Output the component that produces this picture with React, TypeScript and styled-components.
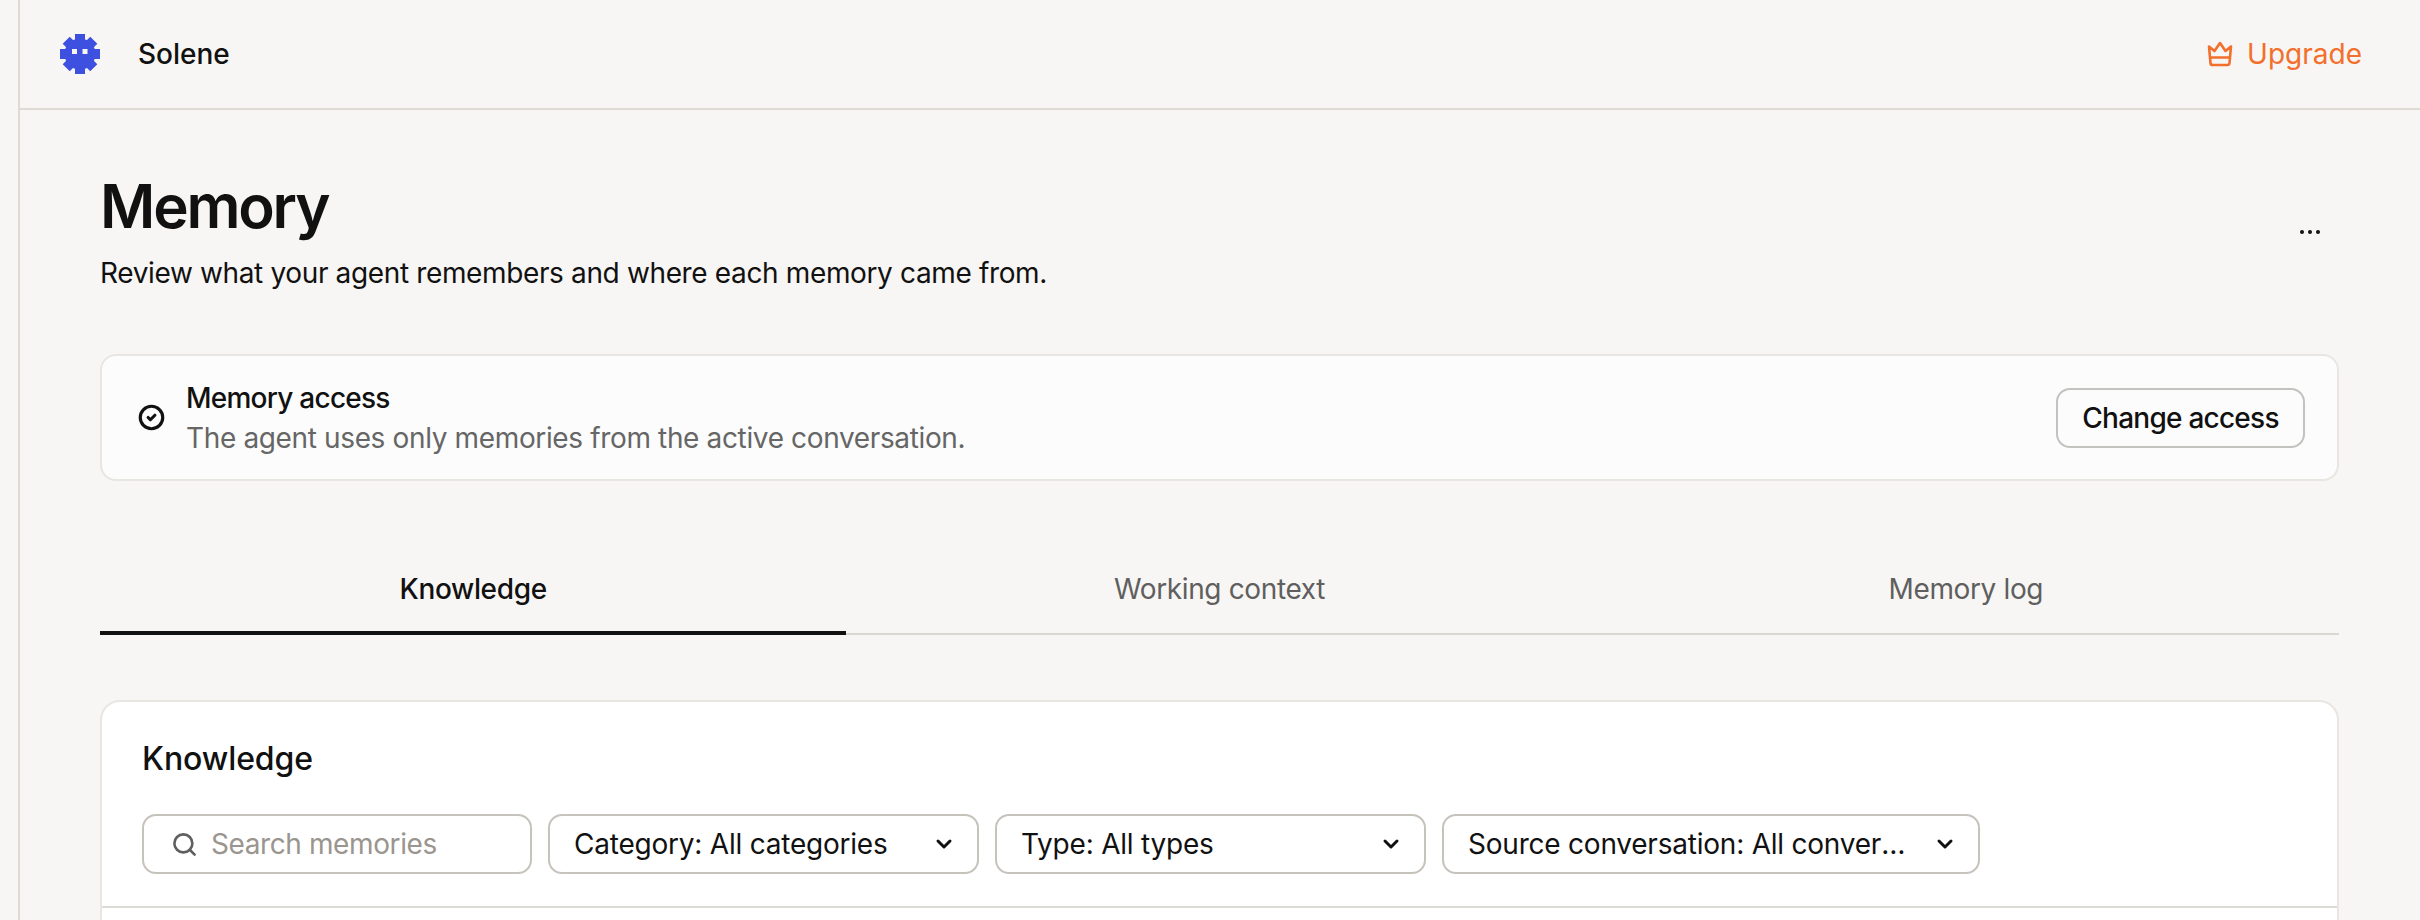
import React from "react";
import styled, { createGlobalStyle } from "styled-components";
import { ChevronDown, CircleCheck, Search } from "lucide-react";

const FONT = `"Inter", "Liberation Sans", sans-serif`;

const GlobalStyle = createGlobalStyle`
  html, body {
    margin: 0;
    padding: 0;
    background: #f7f6f4;
  }
  body {
    font-family: ${FONT};
    color: #111111;
    letter-spacing: -0.36px;
  }
  * {
    box-sizing: border-box;
  }
`;

function Logo() {
  return (
    <svg width="40" height="40" viewBox="0 0 40 40">
      <g fill="#3d50e0">
        <circle cx="20" cy="20" r="15.500" />
        <rect x="15" y="0" width="10" height="40" />
        <rect x="0" y="15" width="40" height="10" />
        <rect x="15" y="0.500" width="10" height="39" transform="rotate(45 20 20)" />
        <rect x="15" y="0.500" width="10" height="39" transform="rotate(-45 20 20)" />
      </g>
      <rect x="12" y="15" width="5" height="5" fill="#f7f6f4" />
      <rect x="22.500" y="15" width="5" height="5" fill="#f7f6f4" />
    </svg>
  );
}

function CrownIcon() {
  return (
    <svg width="26" height="26" viewBox="0 0 26 26" fill="none" stroke="#f26f2c" strokeWidth="2.6" strokeLinejoin="round" strokeLinecap="round">
      <path d="M2 5.500 L7.500 10 L13 2 L18.500 10 L24 5.500 L22.500 22 Q22.300 24 20.300 24 H5.700 Q3.700 24 3.500 22 Z" />
      <path d="M3.500 16.500 H22.500" />
    </svg>
  );
}

function DotsIcon() {
  return (
    <svg width="24" height="6" viewBox="0 0 24 6" fill="#111111">
      <circle cx="4" cy="3" r="2" />
      <circle cx="12" cy="3" r="2" />
      <circle cx="20" cy="3" r="2" />
    </svg>
  );
}

const filters = [
  { label: "Category: All categories", width: 431 },
  { label: "Type: All types", width: 431 },
  { label: "Source conversation: All conversations", width: 538 },
];

export default function App() {
  return (
    <>
      <GlobalStyle />
      <Frame>
        <Rail />
        <Content>
          <TopBar>
            <Brand>
              <Logo />
              <BrandName>Solene</BrandName>
            </Brand>
            <UpgradeLink>
              <CrownIcon />
              Upgrade
            </UpgradeLink>
          </TopBar>
          <Main>
            <PageHead>
              <div>
                <Title>Memory</Title>
                <Subtitle>Review what your agent remembers and where each memory came from.</Subtitle>
              </div>
              <MoreButton>
                <DotsIcon />
              </MoreButton>
            </PageHead>

            <AccessCard>
              <AccessInfo>
                <CircleCheck size={27} strokeWidth={2.8} color="#111111" />
                <div>
                  <AccessTitle>Memory access</AccessTitle>
                  <AccessText>The agent uses only memories from the active conversation.</AccessText>
                </div>
              </AccessInfo>
              <ChangeButton>Change access</ChangeButton>
            </AccessCard>

            <Tabs>
              <Tab $active>Knowledge</Tab>
              <Tab>Working context</Tab>
              <Tab>Memory log</Tab>
            </Tabs>

            <Panel>
              <PanelHead>
                <PanelTitle>Knowledge</PanelTitle>
                <FilterRow>
                  <SearchBox>
                    <Search size={27} strokeWidth={2.3} color="#5f5f5f" />
                    <SearchInput placeholder="Search memories" />
                  </SearchBox>
                  {filters.map((f) => (
                    <Select key={f.label} $width={f.width}>
                      <SelectLabel>{f.label}</SelectLabel>
                      <ChevronDown size={24} strokeWidth={3} color="#111111" />
                    </Select>
                  ))}
                </FilterRow>
              </PanelHead>
            </Panel>
          </Main>
        </Content>
      </Frame>
    </>
  );
}

const Frame = styled.div`
  display: flex;
  height: 920px;
  overflow: hidden;
  padding-left: 18px;
`;

const Rail = styled.div`
  width: 2px;
  flex: none;
  background: #dddbd3;
`;

const Content = styled.div`
  flex: 1;
  min-width: 0;
`;

const TopBar = styled.header`
  height: 110px;
  display: flex;
  align-items: center;
  justify-content: space-between;
  padding: 0 58px 0 40px;
  border-bottom: 2px solid #dddbd3;
`;

const Brand = styled.div`
  display: flex;
  align-items: center;
  gap: 38px;
`;

const BrandName = styled.span`
  font-size: 28px;
  font-weight: 500;
  letter-spacing: 0;
`;

const UpgradeLink = styled.a`
  display: flex;
  align-items: center;
  gap: 14px;
  font-size: 28px;
  font-weight: 400;
  letter-spacing: 0;
  color: #f26f2c;
`;

const Main = styled.main`
  padding: 58px 81px 0 80px;
`;

const PageHead = styled.div`
  display: flex;
  align-items: center;
  justify-content: space-between;
  height: 126px;
`;

const Title = styled.h1`
  margin: 0;
  font-size: 60px;
  line-height: 72px;
  font-weight: 600;
  letter-spacing: -2.2px;
`;

const Subtitle = styled.p`
  margin: 11px 0 0;
  font-size: 28px;
  line-height: 40px;
`;

const MoreButton = styled.button`
  width: 58px;
  height: 66px;
  border: none;
  background: none;
  padding: 2px 0 0;
  display: flex;
  align-items: center;
  justify-content: center;
`;

const AccessCard = styled.section`
  margin-top: 60px;
  height: 127px;
  display: flex;
  align-items: center;
  justify-content: space-between;
  padding: 0 32px 0 36px;
  background: #fcfcfc;
  border: 2px solid #e9e6e1;
  border-radius: 16px;
`;

const AccessInfo = styled.div`
  display: flex;
  align-items: center;
  gap: 21px;
`;

const AccessTitle = styled.div`
  font-size: 28px;
  line-height: 40px;
  font-weight: 500;
  letter-spacing: -0.75px;
`;

const AccessText = styled.div`
  font-size: 28px;
  line-height: 40px;
  color: #666666;
`;

const ChangeButton = styled.button`
  width: 249px;
  height: 60px;
  font-family: ${FONT};
  font-size: 28px;
  font-weight: 500;
  letter-spacing: -0.75px;
  color: #111111;
  background: transparent;
  border: 2px solid #c4c2bf;
  border-radius: 14px;
`;

const Tabs = styled.nav`
  margin-top: 63px;
  display: grid;
  grid-template-columns: repeat(3, 1fr);
  border-bottom: 2px solid #d9d7d2;
`;

const Tab = styled.div<{ $active?: boolean }>`
  height: 91px;
  margin-bottom: -2px;
  padding-top: 2px;
  display: flex;
  align-items: center;
  justify-content: center;
  font-size: 28px;
  font-weight: ${({ $active }) => ($active ? 500 : 400)};
  color: ${({ $active }) => ($active ? "#111111" : "#5f5f5f")};
  border-bottom: 4px solid ${({ $active }) => ($active ? "#111111" : "transparent")};
`;

const Panel = styled.section`
  margin-top: 65px;
  min-height: 400px;
  background: #ffffff;
  border: 2px solid #e9e6e1;
  border-radius: 20px;
`;

const PanelHead = styled.div`
  padding: 33px 40px 32px;
  border-bottom: 2px solid #dddbd6;
`;

const PanelTitle = styled.h2`
  margin: 0;
  font-size: 32px;
  line-height: 48px;
  font-weight: 500;
  letter-spacing: -0.1px;
`;

const FilterRow = styled.div`
  margin-top: 31px;
  display: flex;
  gap: 16px;
`;

const SearchBox = styled.label`
  width: 390px;
  height: 60px;
  flex: none;
  display: flex;
  align-items: center;
  gap: 13px;
  padding: 0 26px 0 27px;
  border: 2px solid #c6c2bc;
  border-radius: 14px;
`;

const SearchInput = styled.input`
  flex: 1;
  min-width: 0;
  border: none;
  outline: none;
  background: none;
  padding: 0;
  font-family: ${FONT};
  font-size: 28px;
  letter-spacing: -0.4px;
  &::placeholder {
    color: #9a958e;
    opacity: 1;
  }
`;

const Select = styled.div<{ $width: number }>`
  width: ${({ $width }) => $width}px;
  height: 60px;
  flex: none;
  display: flex;
  align-items: center;
  justify-content: space-between;
  gap: 24px;
  padding: 0 21px 0 24px;
  border: 2px solid #c6c2bc;
  border-radius: 14px;
`;

const SelectLabel = styled.span`
  flex: 1;
  min-width: 0;
  font-size: 28px;
  letter-spacing: -0.22px;
  white-space: nowrap;
  overflow: hidden;
  text-overflow: ellipsis;
`;
